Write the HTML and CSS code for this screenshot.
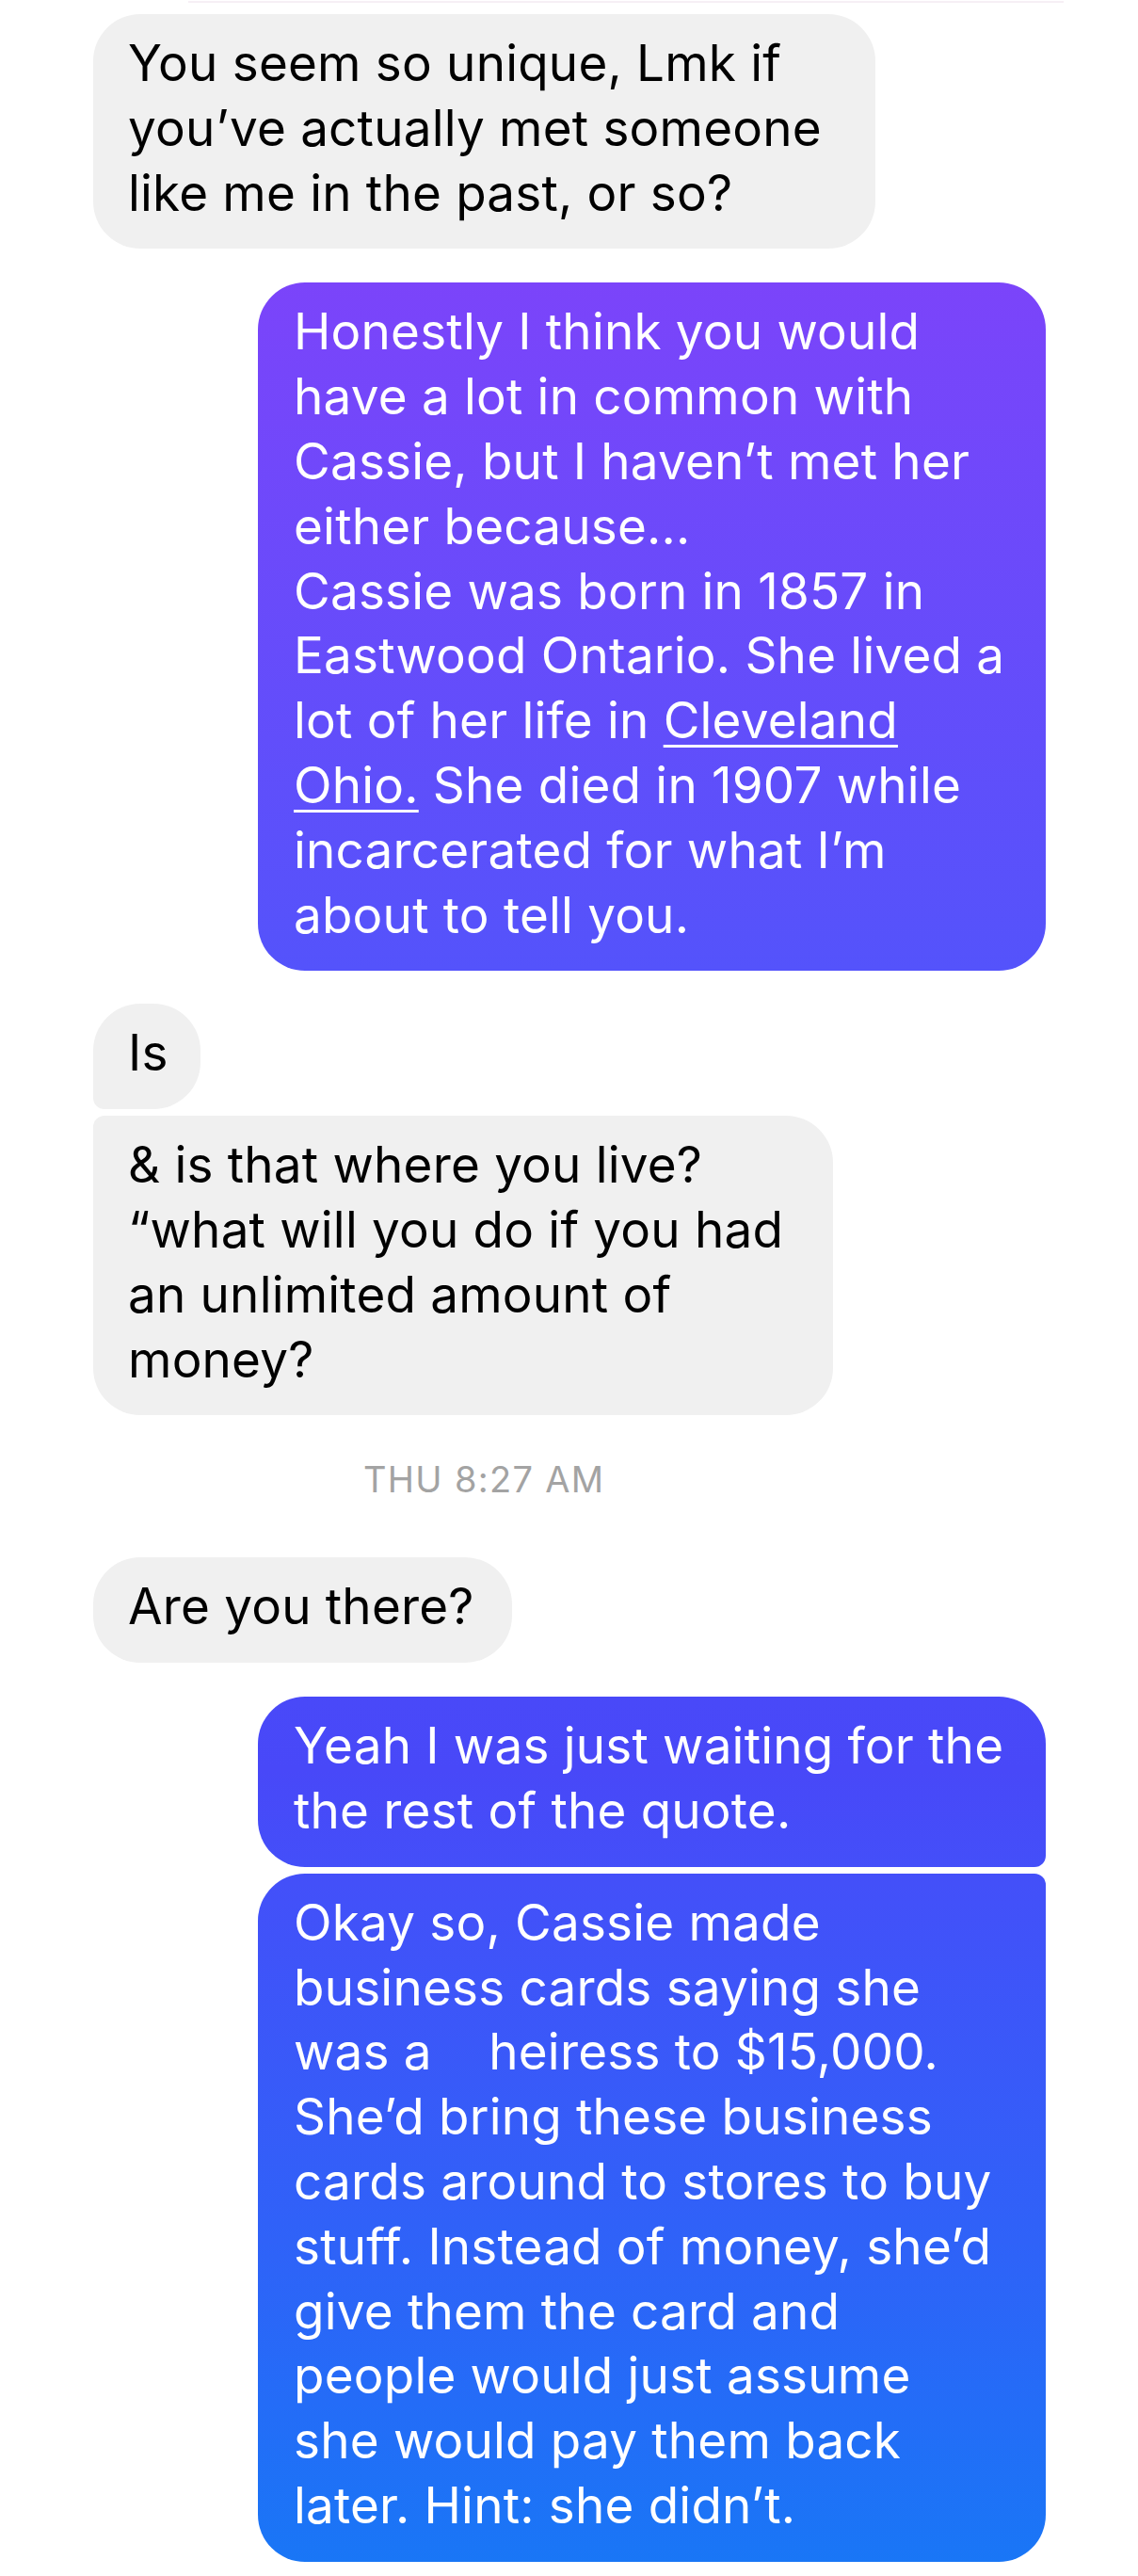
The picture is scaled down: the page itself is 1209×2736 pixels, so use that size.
FILE: index.html
```html
<!DOCTYPE html>
<html lang="en">
<head>
<meta charset="utf-8">
<title>Messages</title>
<link rel="stylesheet" href="styles.css">
</head>
<body>
<div class="thread">
  <div class="prev-edge"></div>

  <div class="row in">
    <div class="bubble gray w-b1">You seem so unique, Lmk if<br>you’ve actually met someone<br>like me in the past, or so?</div>
  </div>

  <div class="row out gap-big">
    <div class="bubble blue">Honestly I think you would<br>have a lot in common with<br>Cassie, but I haven’t met her<br>either because...<br>Cassie was born in 1857 in<br>Eastwood Ontario. She lived a<br>lot of her life in <span class="link">Cleveland</span><br><span class="link">Ohio.</span> She died in 1907 while<br>incarcerated for what I’m<br>about to tell you.</div>
  </div>

  <div class="row in gap-mid">
    <div class="bubble gray first w-is">Is</div>
  </div>
  <div class="row in gap-small">
    <div class="bubble gray last w-live">&amp; is that where you live?<br>“what will you do if you had<br>an unlimited amount of<br>money?</div>
  </div>

  <div class="timestamp">THU 8:27 AM</div>

  <div class="row in">
    <div class="bubble gray w-there">Are you there?</div>
  </div>

  <div class="row out gap-big">
    <div class="bubble blue first">Yeah I was just waiting for the<br>the rest of the quote.</div>
  </div>
  <div class="row out gap-small">
    <div class="bubble blue last">Okay so, Cassie made<br>business cards saying she<br>was a&nbsp;&nbsp;&nbsp; heiress to $15,000.<br>She’d bring these business<br>cards around to stores to buy<br>stuff. Instead of money, she’d<br>give them the card and<br>people would just assume<br>she would pay them back<br>later. Hint: she didn’t.</div>
  </div>
</div>
</body>
</html>
```

FILE: styles.css
```css
html, body {
  margin: 0;
  padding: 0;
  background: #ffffff;
}

body {
  font-family: Inter, "Noto Sans", "Liberation Sans", sans-serif;
  -webkit-font-smoothing: antialiased;
}

.thread {
  position: relative;
  width: 1209px;
  box-sizing: border-box;
  padding: 15px 98px 0 99px;
  display: flex;
  flex-direction: column;
}

.prev-edge {
  position: absolute;
  top: 1px;
  left: 200px;
  width: 930px;
  height: 2px;
  background: #f6eff5;
}

.row {
  display: flex;
}

.row.in {
  justify-content: flex-start;
}

.row.out {
  justify-content: flex-end;
}

.gap-big {
  margin-top: 36px;
}

.gap-mid {
  margin-top: 35px;
}

.gap-small {
  margin-top: 7px;
}

.bubble {
  box-sizing: border-box;
  padding: 18px 36px 25px 37px;
  font-size: 53px;
  line-height: 68.8px;
  letter-spacing: 0.2px;
  border-radius: 50px;
  white-space: nowrap;
}

.bubble.gray {
  background: #f0f0f0;
  color: #000000;
}

.bubble.blue {
  width: 837px;
  padding-left: 38px;
  color: #ffffff;
  background: linear-gradient(to bottom,
    #8a3cfa 0px,
    #7b44fa 300px,
    #5453fb 1030px,
    #4848f8 1880px,
    #4350f9 2000px,
    #2f62f8 2380px,
    #1877f6 2736px) fixed;
}

.row.in .bubble.first {
  border-bottom-left-radius: 12px;
}

.row.in .bubble.last {
  border-top-left-radius: 12px;
}

.row.out .bubble.first {
  border-bottom-right-radius: 12px;
}

.row.out .bubble.last {
  border-top-right-radius: 12px;
}

.w-b1 { width: 831px; }
.w-is { width: 114px; }
.w-live { width: 786px; }
.w-there { width: 445px; }

.link {
  text-decoration: underline;
  text-decoration-thickness: 3px;
  text-underline-offset: 7px;
}

.timestamp {
  margin-top: 47px;
  margin-bottom: 62px;
  padding-left: 287px;
  font-size: 38px;
  line-height: 42px;
  color: #a3a3a3;
  letter-spacing: 1.3px;
}
```
